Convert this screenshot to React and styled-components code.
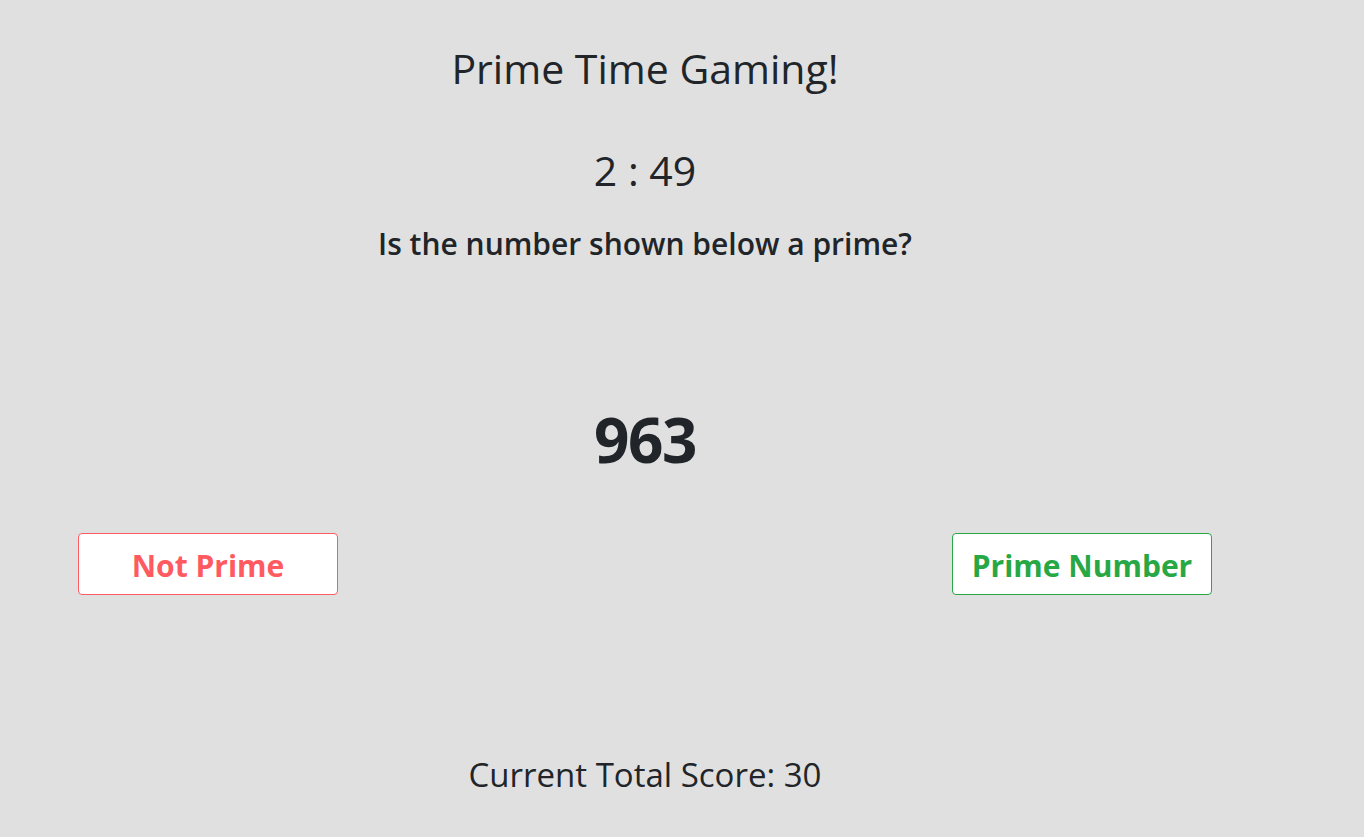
import React from 'react';
import styled, { createGlobalStyle } from 'styled-components';

const GlobalStyle = createGlobalStyle`
  html, body {
    margin: 0;
    padding: 0;
    background: #e0e0e0;
  }
  body {
    font-family: "Open Sans", "Noto Sans", sans-serif;
    color: #212529;
  }
`;

const Page = styled.div`
  width: 1290px;
  min-height: 837px;
  display: flex;
  flex-direction: column;
  align-items: center;
`;

const Title = styled.h1`
  margin: 44px 0 0;
  font-size: 41px;
  font-weight: 500;
  line-height: 1.2;
`;

const Timer = styled.h2`
  margin: 53px 0 0;
  font-size: 41px;
  font-weight: 500;
  line-height: 1.2;
`;

const Question = styled.h3`
  margin: 31px 0 0;
  font-size: 30px;
  font-weight: 600;
  line-height: 1.2;
`;

const Number = styled.div`
  margin: 140px 0 0;
  font-size: 62px;
  font-weight: 700;
  letter-spacing: -1.5px;
  line-height: 1.2;
`;

const ButtonRow = styled.div`
  align-self: stretch;
  display: flex;
  justify-content: space-between;
  padding: 0 78px;
  margin-top: 56px;
`;

const AnswerButton = styled.button`
  width: 260px;
  height: 62px;
  padding: 3px 0 0;
  background: #ffffff;
  border: 1px solid ${(p) => p.$color};
  border-radius: 4px;
  color: ${(p) => p.$color};
  font-family: inherit;
  font-size: 30px;
  font-weight: 700;
  cursor: pointer;
`;

const Score = styled.div`
  margin-top: 160px;
  font-size: 33px;
  font-weight: 400;
  line-height: 1.2;
`;

export default function App() {
  return (
    <>
      <GlobalStyle />
      <Page>
        <Title>Prime Time Gaming!</Title>
        <Timer>2 : 49</Timer>
        <Question>Is the number shown below a prime?</Question>
        <Number>963</Number>
        <ButtonRow>
          <AnswerButton $color="#ff5a5f">Not Prime</AnswerButton>
          <AnswerButton $color="#28a745">Prime Number</AnswerButton>
        </ButtonRow>
        <Score>Current Total Score: 30</Score>
      </Page>
    </>
  );
}
